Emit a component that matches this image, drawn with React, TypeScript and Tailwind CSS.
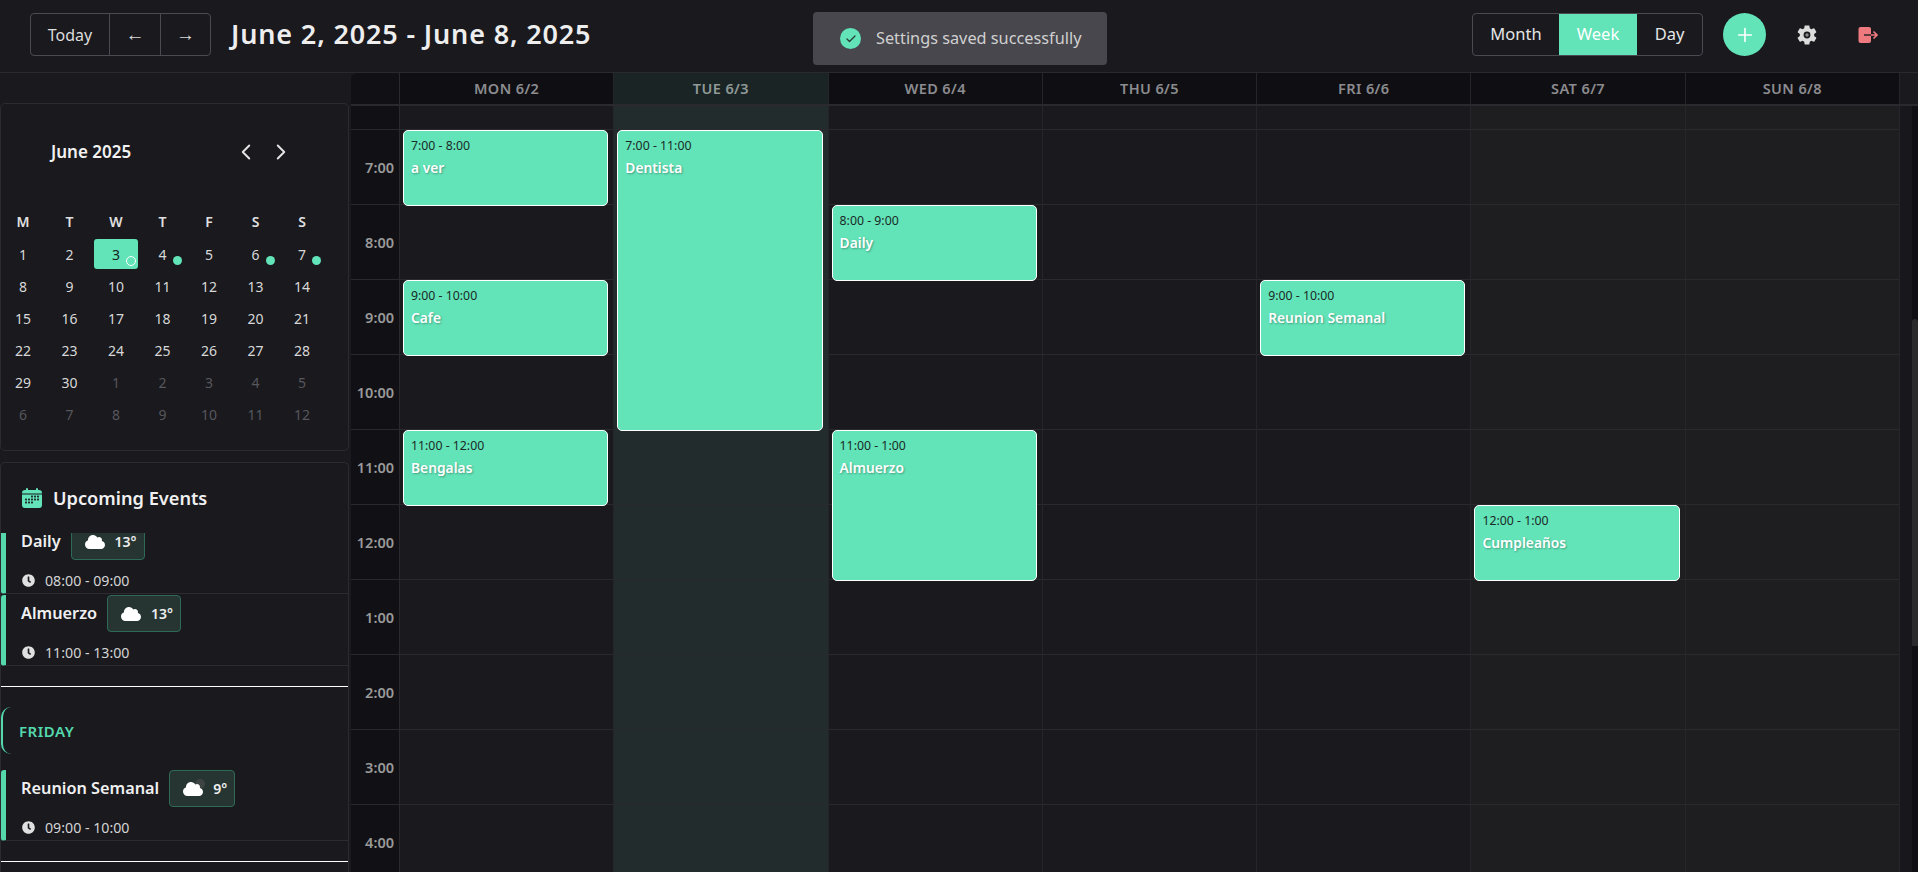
import { Check, ChevronLeft, ChevronRight, Plus } from "lucide-react";
import { FaClock, FaCloud } from "react-icons/fa";

interface CalEvent {
  day: number;
  start: number;
  hours: number;
  time: string;
  title: string;
}

const days = [
  { label: "MON 6/2", tone: "normal" },
  { label: "TUE 6/3", tone: "today" },
  { label: "WED 6/4", tone: "normal" },
  { label: "THU 6/5", tone: "normal" },
  { label: "FRI 6/6", tone: "normal" },
  { label: "SAT 6/7", tone: "weekend" },
  { label: "SUN 6/8", tone: "weekend" },
];

const hours = ["7:00", "8:00", "9:00", "10:00", "11:00", "12:00", "1:00", "2:00", "3:00", "4:00"];

const events: CalEvent[] = [
  { day: 0, start: 0, hours: 1, time: "7:00 - 8:00", title: "a ver" },
  { day: 0, start: 2, hours: 1, time: "9:00 - 10:00", title: "Cafe" },
  { day: 0, start: 4, hours: 1, time: "11:00 - 12:00", title: "Bengalas" },
  { day: 1, start: 0, hours: 4, time: "7:00 - 11:00", title: "Dentista" },
  { day: 2, start: 1, hours: 1, time: "8:00 - 9:00", title: "Daily" },
  { day: 2, start: 4, hours: 2, time: "11:00 - 1:00", title: "Almuerzo" },
  { day: 4, start: 2, hours: 1, time: "9:00 - 10:00", title: "Reunion Semanal" },
  { day: 5, start: 5, hours: 1, time: "12:00 - 1:00", title: "Cumpleaños" },
];

const weekLetters = ["M", "T", "W", "T", "F", "S", "S"];
const monthDays = [
  ...Array.from({ length: 30 }, (_, i) => ({ n: i + 1, muted: false })),
  ...[1, 2, 3, 4, 5, 6, 7, 8, 9, 10, 11, 12].map((n) => ({ n, muted: true })),
];
const withDot = [4, 6, 7];

const GearIcon = () => (
  <svg viewBox="0 0 24 24" className="h-[24px] w-[24px]">
    <path
      fill="#dcdcdc"
      d="M19.14 12.94c.04-.3.06-.61.06-.94 0-.32-.02-.64-.07-.94l2.03-1.58c.18-.14.23-.41.12-.61l-1.92-3.32c-.12-.22-.37-.29-.59-.22l-2.39.96c-.5-.38-1.03-.7-1.62-.94l-.36-2.54c-.04-.24-.24-.41-.48-.41h-3.84c-.24 0-.43.17-.47.41l-.36 2.54c-.59.24-1.13.57-1.62.94l-2.39-.96c-.22-.08-.47 0-.59.22L2.74 8.87c-.12.21-.08.47.12.61l2.03 1.58c-.05.3-.09.63-.09.94s.02.64.07.94l-2.03 1.58c-.18.14-.23.41-.12.61l1.92 3.32c.12.22.37.29.59.22l2.39-.96c.5.38 1.03.7 1.62.94l.36 2.54c.05.24.24.41.48.41h3.84c.24 0 .44-.17.47-.41l.36-2.54c.59-.24 1.13-.56 1.62-.94l2.39.96c.22.08.47 0 .59-.22l1.92-3.32c.12-.22.07-.47-.12-.61l-2.01-1.58z"
    />
    <circle cx="12" cy="12" r="3.4" fill="#19191e" />
    <circle cx="12" cy="12" r="1.7" fill="#8a8a8a" />
  </svg>
);

const LogoutIcon = () => (
  <svg viewBox="0 0 20 18" className="h-[18px] w-[20px]">
    <rect x="0.5" y="1" width="12.5" height="16" rx="2" fill="#ee7a80" />
    <path d="M6 9h7" stroke="#3a2a2e" strokeWidth="1.6" />
    <path d="M13 9h5.5M15.5 5.5 19 9l-3.5 3.5" stroke="#ee7a80" strokeWidth="1.6" fill="none" />
  </svg>
);

const CalendarIcon = () => (
  <svg viewBox="0 0 20 20" className="h-[20px] w-[20px]">
    <rect x="0" y="2" width="20" height="18" rx="3" fill="#62e3b8" />
    <rect x="4" y="0" width="2" height="4" rx="1" fill="#62e3b8" />
    <rect x="14" y="0" width="2" height="4" rx="1" fill="#62e3b8" />
    <rect x="0" y="5.5" width="20" height="1" fill="#19191e" />
    {[8.5, 11.5, 14.5].flatMap((y, r) =>
      [4, 7, 10, 13, 16].map((x, c) =>
        r === 0 && c < 2 ? null : r === 2 && c > 2 ? null : (
          <rect key={`${x}-${y}`} x={x - 0.9} y={y - 0.9} width="1.8" height="1.8" fill="#19191e" />
        ),
      ),
    )}
  </svg>
);

const CloudMoon = () => (
  <span className="relative inline-flex h-[20px] w-[20px] items-center">
    <span className="absolute -right-[2px] top-[0px] h-[10px] w-[10px] rounded-full bg-[#3d4442]" />
    <FaCloud className="relative h-[20px] w-[20px] text-white" />
  </span>
);

const EventItem = ({
  name,
  temp,
  time,
  night,
  first,
}: {
  name: string;
  temp: string;
  time: string;
  night?: boolean;
  first?: boolean;
}) => (
  <div
    className={`mb-[1px] h-[71px] rounded-l-[3px] border-b border-l-[5px] border-b-[#2c2c30] border-l-[#55d9ac] pl-[15px] ${first ? "-mt-[10px]" : ""}`}
  >
    <div className="flex h-[37px] items-center gap-[10px]">
      <span className="text-[16.3px] font-semibold text-[#f0f0f0]">{name}</span>
      <span className="flex h-[37px] items-center gap-[10px] rounded-[4px] border border-[#2f6a57] bg-[#263532] pl-[13px] pr-[7px]">
        {night ? <CloudMoon /> : <FaCloud className="h-[20px] w-[20px] text-white" />}
        <span className="text-[14px] font-semibold text-[#eeeeee]">{temp}</span>
      </span>
    </div>
    <div className="mt-[8px] flex h-[24px] items-center gap-[10px] pl-[1px] text-[#d4d4d4]">
      <FaClock className="h-[13px] w-[13px] text-[#e0e0e0]" />
      <span className="pt-[2px] text-[14.2px]">{time}</span>
    </div>
  </div>
);

const App = () => {
  return (
    <div className="relative flex h-[872px] w-full flex-col overflow-hidden bg-[#19191e] font-['Noto_Sans',sans-serif] text-[#e6e6e6]">
      {/* Header */}
      <header className="flex h-[73px] shrink-0 items-center justify-between border-b border-[#2a2a2e] pb-[3px] pl-[30px] pr-[40px]">
        <div className="flex items-center gap-[20px]">
          <div className="flex h-[43px] items-stretch rounded-[4px] border border-[#4a4a50] text-[19px] text-[#dddddd]">
            <button className="w-[78px] text-[16px]">Today</button>
            <button className="w-[51px] border-l border-[#4a4a50]">←</button>
            <button className="w-[50px] border-l border-[#4a4a50]">→</button>
          </div>
          <h1 className="text-[27px] font-semibold tracking-[0.85px] text-[#eeeeee]">
            June 2, 2025 - June 8, 2025
          </h1>
        </div>
        <div className="flex items-center">
          <div className="flex h-[43px] items-stretch overflow-hidden rounded-[4px] border border-[#4a4a50] text-[16.5px] text-[#e6e6e6]">
            <button className="w-[86px]">Month</button>
            <button className="w-[78px] bg-[#62e3b8] text-white">Week</button>
            <button className="w-[65px]">Day</button>
          </div>
          <button className="ml-[20px] flex h-[43px] w-[43px] items-center justify-center rounded-full bg-[#62e3b8]">
            <Plus className="h-[22px] w-[22px] text-white" strokeWidth={1.75} />
          </button>
          <span className="ml-[29px] flex">
            <GearIcon />
          </span>
          <span className="ml-[39px] flex">
            <LogoutIcon />
          </span>
        </div>
      </header>

      {/* Toast */}
      <div className="absolute left-[813px] top-[12px] flex h-[53px] w-[294px] items-center gap-[15px] rounded-[4px] bg-[#47474d] pl-[27px] text-[16.3px] text-[#d0d0d0]">
        <span className="flex h-[21px] w-[21px] items-center justify-center rounded-full bg-[#62e3b8]">
          <Check className="h-[12px] w-[12px] text-[#2a3a34]" strokeWidth={2.5} />
        </span>
        Settings saved successfully
      </div>

      <div className="flex min-h-0 flex-1">
        {/* Sidebar */}
        <aside className="flex w-[351px] shrink-0 flex-col pr-[2px] pt-[30px]">
          <section className="h-[348px] shrink-0 rounded-[5px] border border-[#2c2c30] bg-[#19191e]">
            <div className="ml-[50px] mt-[36px] flex h-[24px] items-center">
              <span className="w-[182px] text-[17px] font-semibold text-[#f2f2f2]">June 2025</span>
              <ChevronLeft className="h-[26px] w-[26px] text-[#e6e6e6]" strokeWidth={1.75} />
              <ChevronRight className="ml-[9px] h-[26px] w-[26px] text-[#e6e6e6]" strokeWidth={1.75} />
            </div>
            <div className="mt-[43px] grid grid-cols-[repeat(7,44px)] gap-x-[2.5px] gap-y-[2px] text-[14px]">
              {weekLetters.map((w, i) => (
                <div key={i} className="flex h-[30px] items-center justify-center pb-[2px] font-semibold text-[#e0e0e0]">
                  {w}
                </div>
              ))}
              {monthDays.map((d, i) => {
                const isToday = !d.muted && d.n === 3;
                return (
                  <div
                    key={i}
                    className={`relative flex h-[30px] items-center justify-center rounded-[3px] ${
                      isToday ? "bg-[#62e3b8] text-[#14231e]" : d.muted ? "text-[#57575c]" : "text-[#d8d8d8]"
                    }`}
                  >
                    {d.n}
                    {!d.muted && withDot.includes(d.n) && (
                      <span className="absolute bottom-[4px] right-[3px] h-[9px] w-[9px] rounded-full bg-[#62e3b8]" />
                    )}
                    {isToday && (
                      <span className="absolute bottom-[3px] right-[2px] h-[10px] w-[10px] rounded-full border border-white bg-[#62e3b8]" />
                    )}
                  </div>
                );
              })}
            </div>
          </section>

          <section className="mt-[11px] flex min-h-0 flex-1 flex-col rounded-t-[5px] border border-b-0 border-[#2c2c30]">
            <div className="flex h-[70px] shrink-0 items-center gap-[11px] pl-[21px]">
              <CalendarIcon />
              <span className="pt-[1px] text-[18.2px] font-semibold text-[#f0f0f0]">Upcoming Events</span>
            </div>
            <div className="min-h-0 flex-1 overflow-hidden">
              <EventItem first name="Daily" temp="13°" time="08:00 - 09:00" />
              <EventItem name="Almuerzo" temp="13°" time="11:00 - 13:00" />
              <div className="mt-[20px] border-t border-white" />
              <div className="mt-[20px] flex h-[47px] items-center rounded-l-[10px] border-l-2 border-[#55d9ac] pl-[16px] pt-[1px] text-[15px] font-semibold tracking-[0.5px] text-[#55d9ac]">
                FRIDAY
              </div>
              <div className="mt-[16px]">
                <EventItem night name="Reunion Semanal" temp="9°" time="09:00 - 10:00" />
              </div>
              <div className="mt-[20px] border-t border-white" />
            </div>
          </section>
        </aside>

        {/* Week grid */}
        <main className="flex min-w-0 flex-1 flex-col">
          <div className="flex h-[33px] shrink-0 border-b-2 border-[#2a2a2e] pr-[18px]">
            <div className="w-[49px] shrink-0 rounded-tl-[6px] border-r border-[#2a2a2e] bg-[#111115]" />
            <div className="grid flex-1 grid-cols-7">
              {days.map((d) => (
                <div
                  key={d.label}
                  className={`flex items-center justify-center border-r border-[#26262a] text-[14.5px] font-semibold tracking-[0.4px] ${
                    d.tone === "today" ? "bg-[#1a2424] text-[#8f9a98]" : "bg-[#0f0f13] text-[#8c8c90]"
                  }`}
                >
                  {d.label}
                </div>
              ))}
            </div>
          </div>
          <div className="flex min-h-0 flex-1 overflow-hidden">
            <div className="w-[49px] shrink-0 border-r border-[#2a2a2e] bg-[#111115]">
              <div className="h-[24px] border-b border-[#2a2a2e]" />
              {hours.map((h) => (
                <div
                  key={h}
                  className="flex h-[75px] items-center justify-end border-b border-[#2a2a2e] pr-[5px] pt-[2px] text-[14.5px] font-semibold text-[#9a9a9a]"
                >
                  {h}
                </div>
              ))}
            </div>
            <div className="grid flex-1 grid-cols-7 content-start">
              {days.map((d, dayIndex) => (
                <div
                  key={d.label}
                  className={`relative border-r border-[#26262a] ${
                    d.tone === "today" ? "bg-[#222c2c]" : d.tone === "weekend" ? "bg-[#1e1e20]" : "bg-[#19191e]"
                  }`}
                >
                  <div className="h-[24px] border-b border-[#2a2a2e]" />
                  {hours.map((h) => (
                    <div key={h} className="h-[75px] border-b border-[#2a2a2e]" />
                  ))}
                  {events
                    .filter((e) => e.day === dayIndex)
                    .map((e) => (
                      <div
                        key={e.title}
                        className="absolute left-[3px] right-[5px] overflow-hidden rounded-[5px] border-[1.5px] border-white bg-[#62e3b8] px-[7px] pt-[5px]"
                        style={{ top: 24 + e.start * 75, height: e.hours * 75 + 1 }}
                      >
                        <div className="text-[12.3px] leading-[20px] text-[#1a2a26]">{e.time}</div>
                        <div className="text-[13.8px] font-semibold leading-[24px] text-white [text-shadow:1px_1px_2px_rgba(0,0,0,0.3)]">
                          {e.title}
                        </div>
                      </div>
                    ))}
                </div>
              ))}
            </div>
            {/* scrollbar */}
            <div className="flex w-[18px] shrink-0 justify-end bg-[#18181c]">
              <div className="flex w-[6px] flex-col bg-[#101014] pt-[213px]">
                <div className="h-[327px] rounded-t-[3px] bg-[#2a2a2c]" />
              </div>
            </div>
          </div>
        </main>
      </div>
    </div>
  );
};

export default App;
